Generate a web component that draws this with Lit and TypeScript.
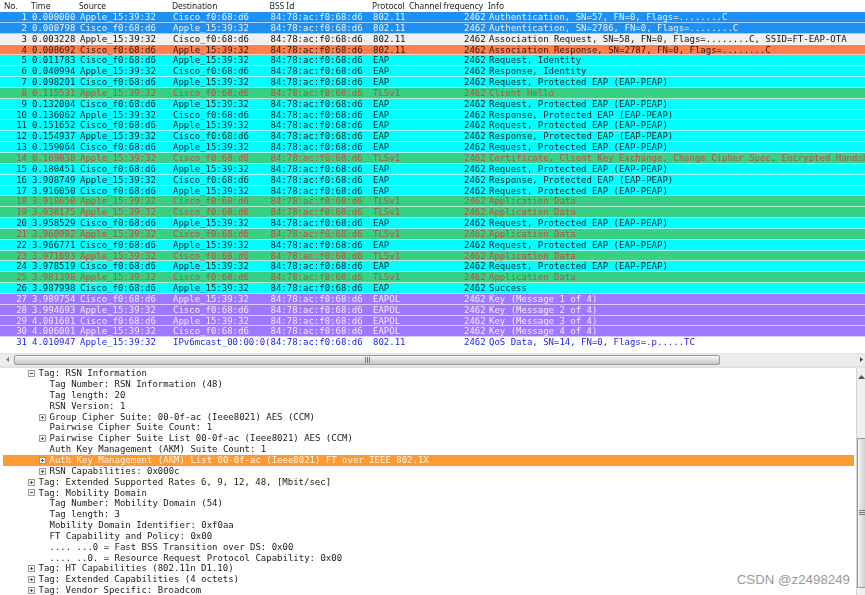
import { LitElement, html, css } from "lit";
import { customElement } from "lit/decorators.js";

const A = "Apple_15:39:32";
const C = "Cisco_f0:68:d6";
const REQ = "Request, Protected EAP (EAP-PEAP)";
const RES = "Response, Protected EAP (EAP-PEAP)";
const APP = "Application Data";

type P = [string, string, string, string, string, string];
const packets: P[] = [
  ["0.000000", A, C, "802.11", "Authentication, SN=57, FN=0, Flags=........C", "auth"],
  ["0.000798", C, A, "802.11", "Authentication, SN=2786, FN=0, Flags=........C", "auth"],
  ["0.003228", A, C, "802.11", "Association Request, SN=58, FN=0, Flags=........C, SSID=FT-EAP-OTA", "assoc"],
  ["0.008692", C, A, "802.11", "Association Response, SN=2787, FN=0, Flags=........C", "resp"],
  ["0.011783", C, A, "EAP", "Request, Identity", "eap"],
  ["0.040994", A, C, "EAP", "Response, Identity", "eap"],
  ["0.098201", C, A, "EAP", REQ, "eap"],
  ["0.115531", A, C, "TLSv1", "Client Hello", "tls"],
  ["0.132004", C, A, "EAP", REQ, "eap"],
  ["0.136062", A, C, "EAP", RES, "eap"],
  ["0.151652", C, A, "EAP", REQ, "eap"],
  ["0.154937", A, C, "EAP", RES, "eap"],
  ["0.159064", C, A, "EAP", REQ, "eap"],
  ["0.169838", A, C, "TLSv1", "Certificate, Client Key Exchange, Change Cipher Spec, Encrypted Handshake Message", "tls"],
  ["0.180451", C, A, "EAP", REQ, "eap"],
  ["3.908749", A, C, "EAP", RES, "eap"],
  ["3.916050", C, A, "EAP", REQ, "eap"],
  ["3.918650", A, C, "TLSv1", APP, "tls"],
  ["3.938175", A, C, "TLSv1", APP, "tls"],
  ["3.958529", C, A, "EAP", REQ, "eap"],
  ["3.960992", A, C, "TLSv1", APP, "tls"],
  ["3.966771", C, A, "EAP", REQ, "eap"],
  ["3.971693", A, C, "TLSv1", APP, "tls"],
  ["3.978519", C, A, "EAP", REQ, "eap"],
  ["3.981398", A, C, "TLSv1", APP, "tls"],
  ["3.987998", C, A, "EAP", "Success", "eap"],
  ["3.989754", C, A, "EAPOL", "Key (Message 1 of 4)", "key"],
  ["3.994693", A, C, "EAPOL", "Key (Message 2 of 4)", "key"],
  ["4.001601", C, A, "EAPOL", "Key (Message 3 of 4)", "key"],
  ["4.006001", A, C, "EAPOL", "Key (Message 4 of 4)", "key"],
  ["4.010947", A, "IPv6mcast_00:00:0(", "802.11", "QoS Data, SN=14, FN=0, Flags=.p.....TC", "qos"],
];

// level, expander ("+", "-", ""), text, selected
type T = [number, string, string, boolean?];
const tree: T[] = [
  [1, "-", "Tag: RSN Information"],
  [2, "", "Tag Number: RSN Information (48)"],
  [2, "", "Tag length: 20"],
  [2, "", "RSN Version: 1"],
  [2, "+", "Group Cipher Suite: 00-0f-ac (Ieee8021) AES (CCM)"],
  [2, "", "Pairwise Cipher Suite Count: 1"],
  [2, "+", "Pairwise Cipher Suite List 00-0f-ac (Ieee8021) AES (CCM)"],
  [2, "", "Auth Key Management (AKM) Suite Count: 1"],
  [2, "+", "Auth Key Management (AKM) List 00-0f-ac (Ieee8021) FT over IEEE 802.1X", true],
  [2, "+", "RSN Capabilities: 0x000c"],
  [1, "+", "Tag: Extended Supported Rates 6, 9, 12, 48, [Mbit/sec]"],
  [1, "-", "Tag: Mobility Domain"],
  [2, "", "Tag Number: Mobility Domain (54)"],
  [2, "", "Tag length: 3"],
  [2, "", "Mobility Domain Identifier: 0xf0aa"],
  [2, "", "FT Capability and Policy: 0x00"],
  [2, "", ".... ...0 = Fast BSS Transition over DS: 0x00"],
  [2, "", ".... ..0. = Resource Request Protocol Capability: 0x00"],
  [1, "+", "Tag: HT Capabilities (802.11n D1.10)"],
  [1, "+", "Tag: Extended Capabilities (4 octets)"],
  [1, "+", "Tag: Vendor Specific: Broadcom"],
];

@customElement("app-root")
export class AppRoot extends LitElement {
  static styles = css`
    :host {
      display: block;
      position: relative;
      width: 865px;
      height: 595px;
      overflow: hidden;
      background: #fff;
      font-family: "DejaVu Sans Mono", "Liberation Mono", monospace;
      font-size: 9px;
      color: #111;
    }
    .page { display: flex; flex-direction: column; height: 595px; filter: blur(0.35px); }
    .cols {
      display: grid;
      grid-template-columns: 24px 5px 48px 93px 97.5px 102.5px 91px 25px 1fr;
      padding-left: 3px;
    }
    .head {
      height: 12px;
      line-height: 11px;
      font-family: "Noto Sans", "Liberation Sans", sans-serif;
      font-size: 8.4px;
      color: #222;
      box-sizing: border-box;
    }
    .head span { white-space: nowrap; margin-left: -1px; }
    .head .no { margin-left: 1px; }
    .head .ch { grid-column: 7 / 9; display: flex; }
    .head .ch b { font-weight: 400; flex: none; }
    .head .ch .proto { width: 37px; }
    .pkt {
      height: 10.85px;
      line-height: 10px;
      white-space: nowrap;
      box-shadow: inset 0 -1px 0 rgba(255, 255, 255, 0.6);
    }
    .pkt span { overflow: hidden; }
    .pkt .no { text-align: right; grid-column: 1; }
    .pkt .tm { grid-column: 3; }
    .pkt .dst { overflow: visible; }
    .auth { background: #1e90f4; color: #e6f2ff; }
    .assoc { background: #f0f0f0; color: #111; }
    .resp { background: #ff7f50; color: #3a1408; }
    .eap { background: #00ffff; color: #02262a; }
    .tls { background: #38d084; color: #c24a4a; }
    .key { background: #a078ff; color: #f1eaff; }
    .qos { background: #fff; color: #1c1cf0; box-shadow: none; }

    .hbar {
      margin-top: 4.5px;
      height: 12px;
      display: flex;
      align-items: center;
      background: #ececec;
      border-top: 1px solid #e4e4e4;
      border-bottom: 2px solid #e2e2e2;
      flex: none;
    }
    .harrow { width: 14px; flex: none; display: flex; justify-content: center; }
    .hthumb {
      width: 706px;
      height: 10px;
      flex: none;
      box-sizing: border-box;
      border: 1px solid #9a9a9a;
      border-radius: 2px;
      background: linear-gradient(#f7f7f7, #c6c6c6);
      display: flex;
      align-items: center;
      justify-content: center;
    }
    .hrest { flex: 1; display: flex; justify-content: flex-end; padding-right: 1px; }

    .detail { flex: 1; display: flex; min-height: 0; }
    .tree { flex: 1; min-width: 0; padding: 0.6px 0 0 3px; }
    .node {
      height: 10.85px;
      line-height: 10.85px;
      white-space: nowrap;
      display: flex;
      align-items: center;
      margin-right: 2px;
      color: #1a1a1a;
    }
    .node.l1 { padding-left: 25px; }
    .node.l2 { padding-left: 36px; }
    .node .exp { width: 10.5px; flex: none; display: flex; align-items: center; }
    .node .gap { width: 10.5px; flex: none; }
    .node.sel { background: #ff9a33; color: #fff3e2; }

    .vbar {
      width: 8px;
      flex: none;
      border-left: 1px solid #d4d4d4;
      background: #efefef;
      display: flex;
      flex-direction: column;
      align-items: stretch;
    }
    .varrow { height: 70px; display: flex; justify-content: center; padding-top: 7px; box-sizing: border-box; flex: none; }
    .vthumb {
      height: 150px;
      flex: none;
      box-sizing: border-box;
      border: 1px solid #9a9a9a;
      border-right: 0;
      background: linear-gradient(90deg, #f4f4f4, #cfcfcf);
      display: flex;
      align-items: center;
      justify-content: center;
    }
    .mark {
      position: absolute;
      right: 15px;
      top: 572px;
      font: 13.3px/16px "Liberation Sans", Arial, sans-serif;
      color: #9a9a9a;
    }
  `;

  private expander(kind: string) {
    return html`<svg width="7" height="7" viewBox="0 0 7 7">
      <rect x=".5" y=".5" width="6" height="6" fill="#f4f4f4" stroke="#9a9a9a"></rect>
      <path d=${kind === "+" ? "M2 3.5h3M3.5 2v3" : "M2 3.5h3"} stroke="#555" fill="none"></path>
    </svg>`;
  }

  render() {
    return html`
      <div class="page">
        <div class="cols head">
          <span class="no">No.</span><span></span><span>Time</span><span>Source</span><span>Destination</span><span>BSS Id</span>
          <span class="ch"><b class="proto">Protocol</b><b>Channel frequency</b></span><span>Info</span>
        </div>
        ${packets.map(
          (p, i) => html`<div class="cols pkt ${p[5]}">
            <span class="no">${i + 1}</span>
            <span class="tm">${p[0]}</span>
            <span>${p[1]}</span>
            <span class="dst">${p[2]}</span>
            <span>84:78:ac:f0:68:d6</span>
            <span>${p[3]}</span>
            <span>2462</span>
            <span>${p[4]}</span>
          </div>`
        )}
        <div class="hbar">
          <div class="harrow">
            <svg width="5" height="7" viewBox="0 0 5 7"><path d="M4 1v5L1 3.500z" fill="#777"></path></svg>
          </div>
          <div class="hthumb">
            <svg width="5" height="6" viewBox="0 0 5 6"><path d="M.5 0v6M2.500 0v6M4.500 0v6" stroke="#777"></path></svg>
          </div>
          <div class="hrest">
            <svg width="4" height="7" viewBox="0 0 4 7"><path d="M0 1v5l3-2.500z" fill="#444"></path></svg>
          </div>
        </div>
        <div class="detail">
          <div class="tree">
            ${tree.map(
              (t) => html`<div class="node l${t[0]} ${t[3] ? "sel" : ""}">
                ${t[1] ? html`<span class="exp">${this.expander(t[1])}</span>` : html`<span class="gap"></span>`}
                <span>${t[2]}</span>
              </div>`
            )}
          </div>
          <div class="vbar">
            <div class="varrow">
              <svg width="7" height="4" viewBox="0 0 7 4"><path d="M0 4h7L3.500 0z" fill="#555"></path></svg>
            </div>
            <div class="vthumb">
              <svg width="6" height="5" viewBox="0 0 6 5"><path d="M0 .5h6M0 2.500h6M0 4.500h6" stroke="#777"></path></svg>
            </div>
          </div>
        </div>
      </div>
      <div class="mark">CSDN @z2498249</div>
    `;
  }
}
